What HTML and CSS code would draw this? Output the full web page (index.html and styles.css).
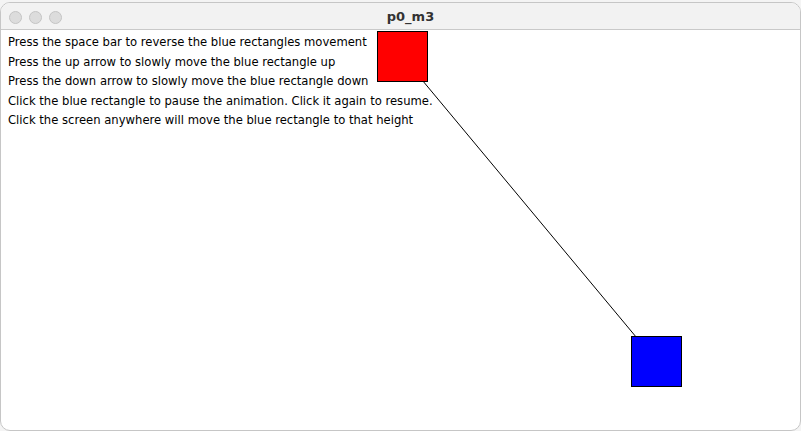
FILE: index.html
```html
<!DOCTYPE html>
<html>
<head>
<meta charset="utf-8">
<link rel="stylesheet" href="styles.css">
</head>
<body>
<div class="desk">
  <div class="window">
    <div class="titlebar">
      <div class="lights">
        <span class="light"></span><span class="light"></span><span class="light"></span>
      </div>
      <div class="title">p0_m3</div>
    </div>
    <div class="canvas">
      <div class="lines">
        <div class="line">Press the space bar to reverse the blue rectangles movement</div>
        <div class="line">Press the up arrow to slowly move the blue rectangle up</div>
        <div class="line">Press the down arrow to slowly move the blue rectangle down</div>
        <div class="line">Click the blue rectangle to pause the animation. Click it again to resume.</div>
        <div class="line">Click the screen anywhere will move the blue rectangle to that height</div>
      </div>
      <svg class="scene" width="801" height="401" viewBox="0 0 801 401">
        <line x1="402.5" y1="26.5" x2="656.5" y2="331.5" stroke="#000" stroke-width="1"/>
        <rect x="377.5" y="1.5" width="50" height="50" fill="#ff0000" stroke="#000" stroke-width="1"/>
        <rect x="631.5" y="306.5" width="50" height="50" fill="#0000ff" stroke="#000" stroke-width="1"/>
      </svg>
    </div>
  </div>
</div>
</body>
</html>
```
FILE: styles.css
```css
html, body {
  margin: 0;
  padding: 0;
  background: #e8e8e8;
  overflow: hidden;
}
.desk {
  width: 801px;
  height: 431px;
  padding-top: 2px;
  box-sizing: border-box;
  background: #f4f4f4;
}
.window {
  width: 801px;
  height: 429px;
  background: #ffffff;
  border: 1px solid #c6c6c6;
  border-radius: 10px 10px 10px 10px;
  box-sizing: border-box;
  overflow: hidden;
  display: flex;
  flex-direction: column;
}
.titlebar {
  height: 26px;
  flex: none;
  background: #f2f2f2;
  border-bottom: 1px solid #c9c9c9;
  display: flex;
  align-items: center;
  position: relative;
}
.lights {
  display: flex;
  gap: 7px;
  padding-left: 8px;
  padding-top: 2px;
}
.light {
  width: 11px;
  height: 11px;
  border-radius: 50%;
  background: #dcdcdc;
  border: 1px solid #c4c4c4;
}
.title {
  position: absolute;
  left: 0;
  right: 0;
  top: 0;
  bottom: 0;
  display: flex;
  align-items: center;
  justify-content: center;
  padding-left: 20px;
  font-family: "DejaVu Sans", "Liberation Sans", sans-serif;
  font-weight: bold;
  font-size: 13px;
  color: #333;
}
.canvas {
  flex: 1;
  position: relative;
}
.lines {
  padding: 3px 0 0 7px;
  font-family: "DejaVu Sans", sans-serif;
  font-size: 11.6px;
  color: #000;
}
.line {
  height: 19.5px;
  line-height: 19.5px;
  white-space: nowrap;
}
.scene {
  position: absolute;
  left: -1px;
  top: 0;
}
```
